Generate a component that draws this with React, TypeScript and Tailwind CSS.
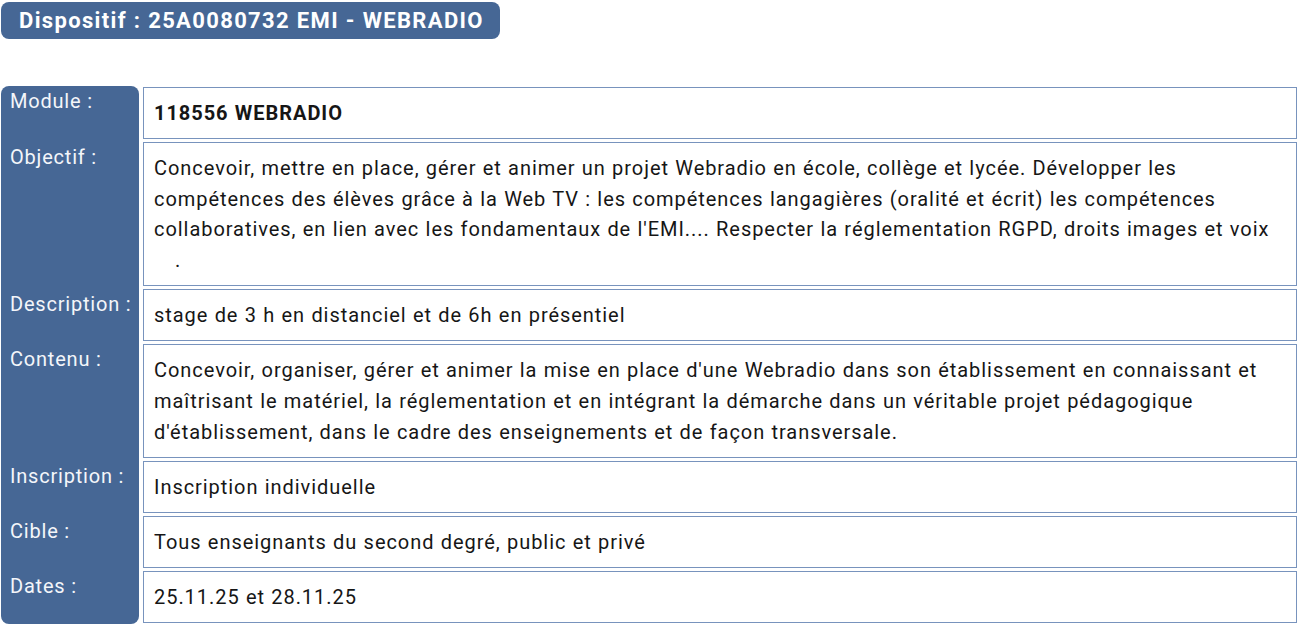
import React from "react";

const rows: { label: string; content: React.ReactNode; bold?: boolean; multi?: boolean }[] = [
  { label: "Module :", content: "118556 WEBRADIO", bold: true },
  {
    label: "Objectif :",
    multi: true,
    content: (
      <>
        Concevoir, mettre en place, gérer et animer un projet Webradio en école, collège et lycée. Développer les
        compétences des élèves grâce à la Web TV : les compétences langagières (oralité et écrit) les compétences
        collaboratives, en lien avec les fondamentaux de l'EMI.... Respecter la réglementation RGPD, droits images et voix
        <br />
        <span className="pl-[21px]">.</span>
      </>
    ),
  },
  { label: "Description :", content: "stage de 3 h en distanciel et de 6h en présentiel" },
  {
    label: "Contenu :",
    multi: true,
    content:
      "Concevoir, organiser, gérer et animer la mise en place d'une Webradio dans son établissement en connaissant et maîtrisant le matériel, la réglementation et en intégrant la démarche dans un véritable projet pédagogique d'établissement, dans le cadre des enseignements et de façon transversale.",
  },
  { label: "Inscription :", content: "Inscription individuelle" },
  { label: "Cible :", content: "Tous enseignants du second degré, public et privé" },
  { label: "Dates :", content: "25.11.25 et 28.11.25" },
];

export default function App() {
  return (
    <div className="w-[1300px] h-[626px] bg-white font-['Roboto',sans-serif] overflow-hidden">
      <div className="pt-[2px] pl-[1px]">
        <div className="inline-flex items-center h-[37px] w-[499px] rounded-[8px] bg-[#466795] pl-[18px] text-white text-[22px] font-bold tracking-[1.35px]">
          Dispositif : 25A0080732 EMI - WEBRADIO
        </div>
      </div>
      <div className="mt-[47px] ml-[1px] grid grid-cols-[138px_1fr] gap-x-[4px] w-[1296px]">
        {rows.map((r, i) => (
          <React.Fragment key={i}>
            <div
              className={`bg-[#466795] text-[#f4f6fa] text-[20px] leading-[30px] tracking-[0.8px] pl-[9px] ${
                i === 0 ? "rounded-t-[8px] pt-0" : "pt-[2px]"
              } ${i === rows.length - 1 ? "rounded-b-[8px]" : ""}`}
            >
              {r.label}
            </div>
            <div className={i === 0 ? "pt-[1px] pb-[1px]" : "pt-[2px] pb-[1px]"}>
              <div
                className={`border border-[#7893bd] bg-white px-[10px] py-[10px] text-[20px] ${
                  r.multi ? "leading-[30.6px]" : "leading-[30px]"
                } tracking-[0.95px] [word-spacing:0.4px] text-[#161616] ${r.bold ? "font-bold" : ""}`}
              >
                {r.content}
              </div>
            </div>
          </React.Fragment>
        ))}
      </div>
    </div>
  );
}
